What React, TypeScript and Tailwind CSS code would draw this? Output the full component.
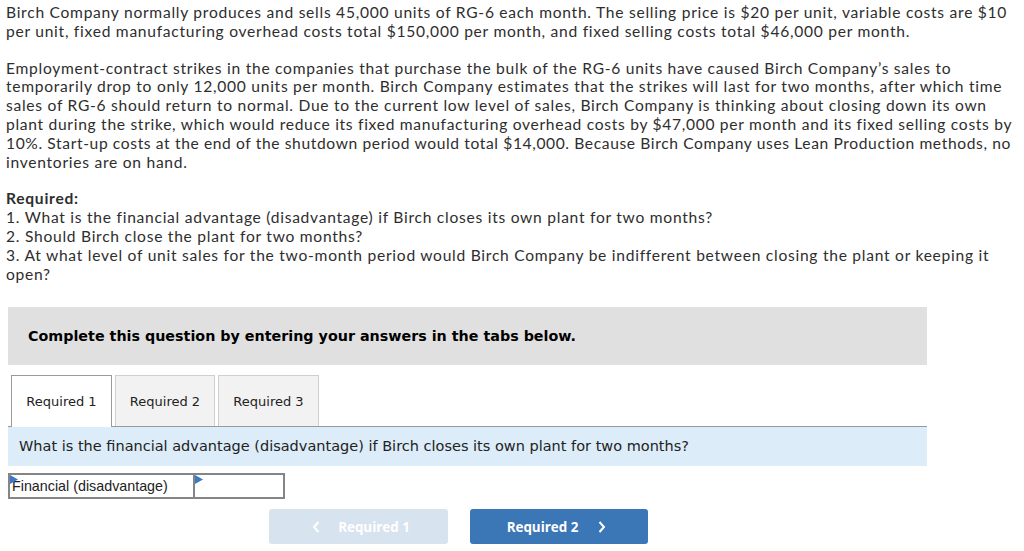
import React from "react";

const body = { fontFamily: 'Lato, "Open Sans", Arial, sans-serif' };
const btn = { fontFamily: '"Open Sans", Arial, sans-serif' };
const verdana = { fontFamily: '"DejaVu Sans", Verdana, sans-serif' };
const arial = { fontFamily: '"Liberation Sans", Arial, sans-serif' };

function Flag() {
  return (
    <svg width="8" height="9" viewBox="0 0 8 9" className="absolute left-0 top-0">
      <polygon points="0,0 8,4.5 0,9" fill="#3c78c4" />
    </svg>
  );
}

type Line = string | { t: string; c: string };

function Lines({ lines, className = "" }: { lines: Line[]; className?: string }) {
  return (
    <div className={className}>
      {lines.map((l, i) =>
        typeof l === "string" ? (
          <div key={i} className="whitespace-nowrap">
            {l}
          </div>
        ) : (
          <div key={i} className={"whitespace-nowrap " + l.c}>
            {l.t}
          </div>
        )
      )}
    </div>
  );
}

export default function App() {
  return (
    <div className="w-[1024px] h-[551px] bg-white overflow-hidden text-[#2e2e2e]">
      <div className="pl-[6px] pt-[3px] text-[15.6px] leading-[18.8px] tracking-[0.73px]" style={body}>
        <Lines
          lines={[
            "Birch Company normally produces and sells 45,000 units of RG-6 each month. The selling price is $20 per unit, variable costs are $10",
            "per unit, fixed manufacturing overhead costs total $150,000 per month, and fixed selling costs total $46,000 per month.",
          ]}
        />
        <Lines
          className="mt-[18px]"
          lines={[
            "Employment-contract strikes in the companies that purchase the bulk of the RG-6 units have caused Birch Company’s sales to",
            "temporarily drop to only 12,000 units per month. Birch Company estimates that the strikes will last for two months, after which time",
            "sales of RG-6 should return to normal. Due to the current low level of sales, Birch Company is thinking about closing down its own",
            { t: "plant during the strike, which would reduce its fixed manufacturing overhead costs by $47,000 per month and its fixed selling costs by", c: "tracking-[0.7px]" },
            { t: "10%. Start-up costs at the end of the shutdown period would total $14,000. Because Birch Company uses Lean Production methods, no", c: "tracking-[0.62px]" },
            "inventories are on hand.",
          ]}
        />
        <div className="mt-[18px] font-bold">Required:</div>
        <Lines
          lines={[
            "1. What is the financial advantage (disadvantage) if Birch closes its own plant for two months?",
            "2. Should Birch close the plant for two months?",
            "3. At what level of unit sales for the two-month period would Birch Company be indifferent between closing the plant or keeping it",
            "open?",
          ]}
        />
      </div>

      <div className="ml-[8px] w-[919px]">
        <div className="mt-[24px] h-[58px] bg-[#e0e0e0] flex items-center pl-[20px]">
          <span className="text-[14.3px] font-bold text-black" style={verdana}>
            Complete this question by entering your answers in the tabs below.
          </span>
        </div>

        <div className="mt-[9px] flex items-end gap-[3px] pl-[3px] h-[52px]" style={verdana}>
          <div className="w-[101px] h-[52px] border border-b-0 border-[#9a9a9a] bg-white flex items-center justify-center text-[13px] text-[#222] -mb-px z-10">
            Required 1
          </div>
          <div className="w-[100px] h-[51px] border border-b-0 border-[#cfcfcf] bg-[#f2f2f2] flex items-center justify-center text-[13px] text-[#222]">
            Required 2
          </div>
          <div className="w-[101px] h-[51px] border border-b-0 border-[#cfcfcf] bg-[#f2f2f2] flex items-center justify-center text-[13px] text-[#222]">
            Required 3
          </div>
        </div>

        <div className="border-t border-[#9a9a9a] bg-[#dcecf8] h-[40px] flex items-center pl-[11px]">
          <span className="text-[14.5px] text-[#222]" style={verdana}>
            What is the financial advantage (disadvantage) if Birch closes its own plant for two months?
          </span>
        </div>

        <div className="mt-[7px] flex" style={arial}>
          <div className="relative w-[186px] h-[26px] border-2 border-r border-[#858585] flex items-center pl-[2px] text-[14.3px] text-[#222]">
            <Flag />
            Financial (disadvantage)
          </div>
          <div className="relative w-[91px] h-[26px] border-2 border-l border-[#858585]">
            <Flag />
          </div>
        </div>

        <div className="mt-[10px] flex gap-[22px] pl-[261px]" style={btn}>
          <div className="w-[179px] h-[35px] rounded-[3px] bg-[#d8e3f0] flex items-center justify-center gap-[18px] text-white text-[13.4px] font-bold pl-[5px]">
            <svg width="8" height="12" viewBox="0 0 8 12"><path d="M6.5 1 L2 6 L6.5 11" stroke="white" strokeWidth="2" fill="none" /></svg>
            <span>Required 1</span>
          </div>
          <div className="w-[178px] h-[35px] rounded-[3px] bg-[#3b76b6] flex items-center justify-center gap-[20px] text-white text-[13.4px] font-bold pr-[5px]">
            <span>Required 2</span>
            <svg width="8" height="12" viewBox="0 0 8 12"><path d="M1.5 1 L6 6 L1.5 11" stroke="white" strokeWidth="2" fill="none" /></svg>
          </div>
        </div>
      </div>
    </div>
  );
}
